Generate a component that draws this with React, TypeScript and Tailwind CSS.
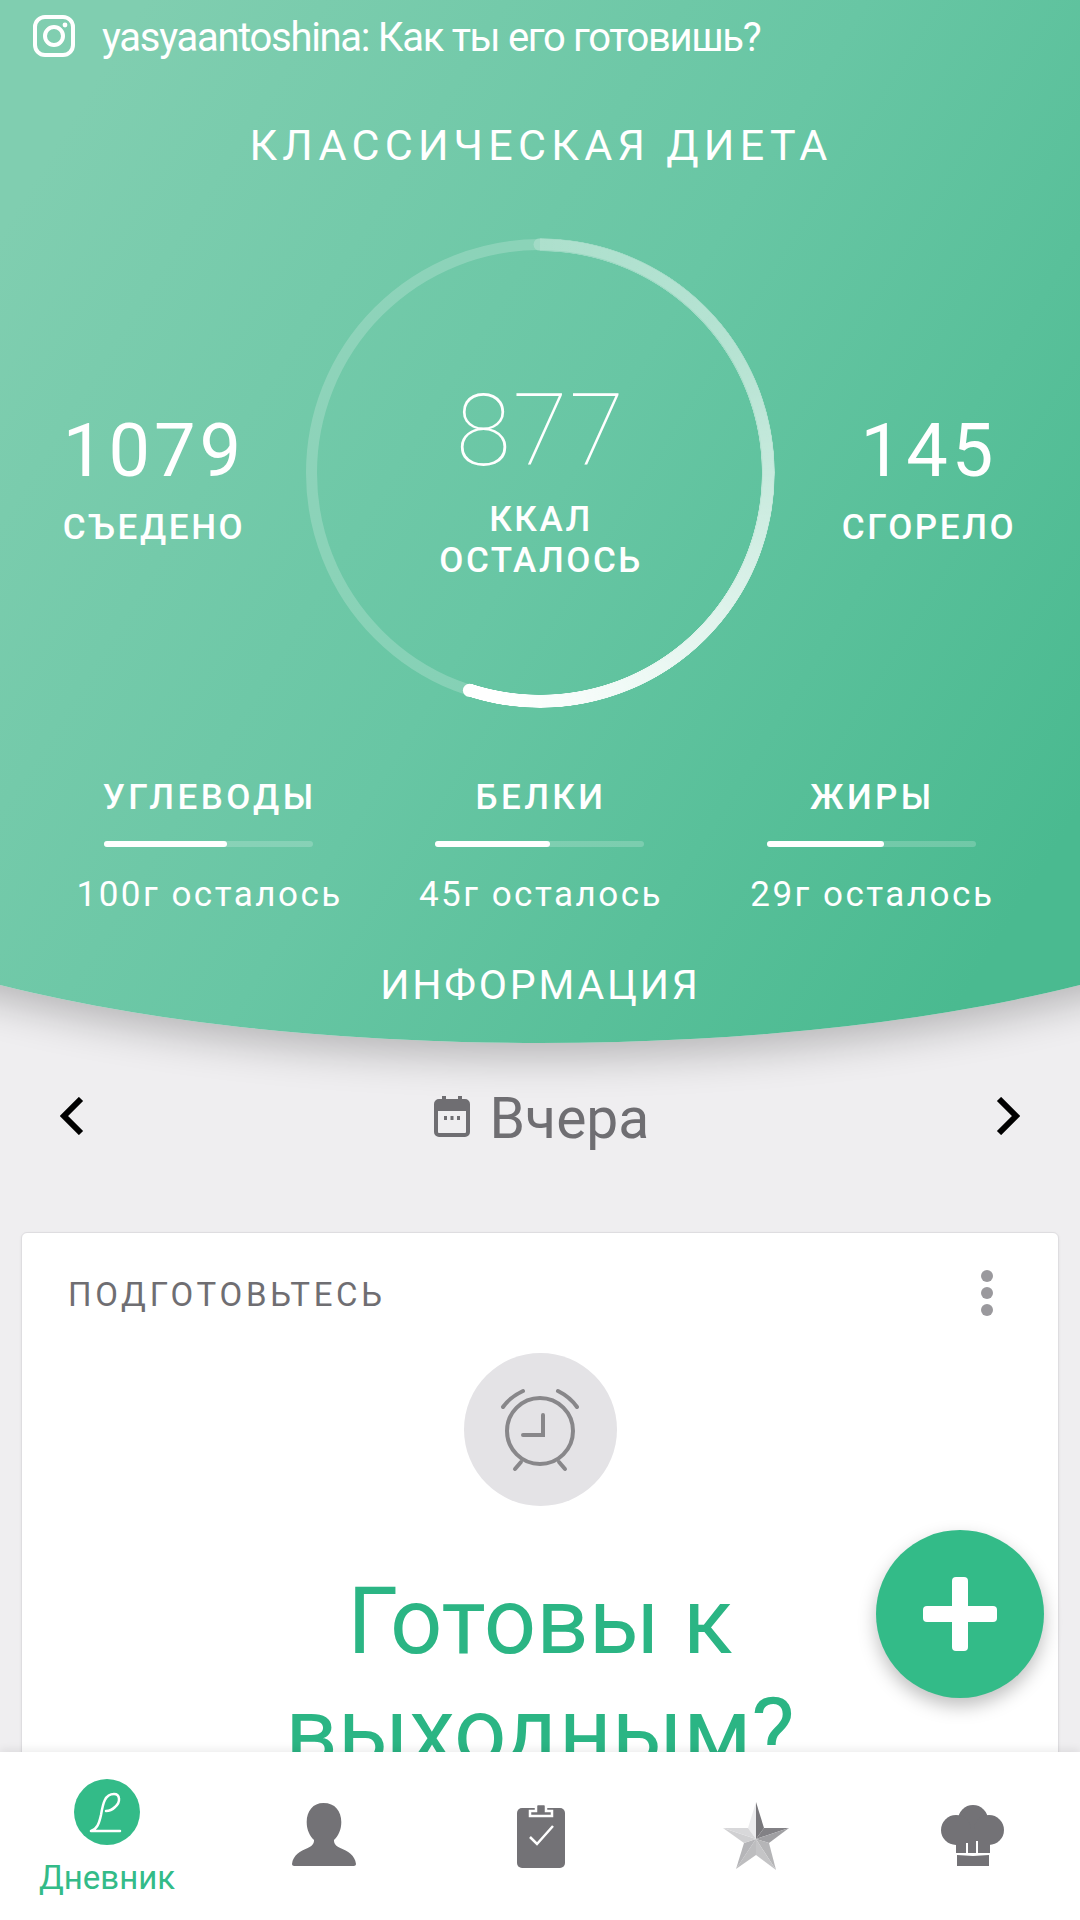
function Ring() {
  const a = ((198 - 90) * Math.PI) / 180;
  const ex = 235 + 228.5 * Math.cos(a);
  const ey = 235 + 228.5 * Math.sin(a);
  return (
    <>
      <svg width="470" height="470" viewBox="0 0 470 470" className="absolute inset-0">
        <circle cx="235" cy="235" r="228.5" fill="none" stroke="#ffffff" strokeOpacity="0.2" strokeWidth="11" />
        <path d="M235 0a6.5 6.5 0 0 0 0 13z" fill="#ffffff" fillOpacity="0.2" />
        <circle cx={ex} cy={ey} r="6.5" fill="#ffffff" />
      </svg>
      <div className="absolute inset-0 rounded-full bg-[conic-gradient(rgba(255,255,255,0.3)_0deg,rgba(255,255,255,0.42)_60deg,rgba(255,255,255,0.62)_100deg,rgba(255,255,255,0.86)_150deg,#fff_190deg,#fff_198deg,transparent_198deg)] [mask:radial-gradient(closest-side,transparent_221.5px,#000_222px,#000_234.5px,transparent_235px)]" />
    </>
  );
}

function Stat({ value, label }: { value: string; label: string }) {
  return (
    <div className="flex w-[306px] flex-col items-center pt-[177px] pl-[3px]">
      <div className="text-[74px] leading-[72px] tracking-[4px]">{value}</div>
      <div className="mt-[21px] text-[35px] leading-[40px] font-medium tracking-[2.6px]">{label}</div>
    </div>
  );
}

function Macro({ name, left, fill }: { name: string; left: string; fill: string }) {
  return (
    <div className="flex flex-col items-center">
      <div className="mt-[1px] pl-[2px] text-[35px] leading-[40px] font-medium tracking-[3.4px]">{name}</div>
      <div className="mt-[23px] h-[6px] w-[209px] rounded-full bg-white/20">
        <div className={`h-full rounded-full bg-white ${fill}`} />
      </div>
      <div className="mt-[28px] pl-[2px] text-[35px] leading-[40px] tracking-[2.5px] whitespace-nowrap">{left}</div>
    </div>
  );
}

function Header() {
  return (
    <header className="relative z-10 -mx-[260px] h-[1043px] w-[1600px] rounded-b-[50%_221px] bg-[linear-gradient(122deg,#80ceb0_18%,#68c6a4_50%,#4aba90_82%)] px-[260px] text-white shadow-[0_14px_40px_rgba(0,0,0,0.24)]">
      <div className="flex h-[57px] items-center pt-[15px] pl-[33px]">
        <svg width="42" height="42" viewBox="0 0 42 42" fill="none" stroke="#fff" strokeWidth="4">
          <rect x="2" y="2" width="38" height="38" rx="10" />
          <circle cx="21" cy="21" r="9" />
          <circle cx="32" cy="10" r="2.4" fill="#fff" stroke="none" />
        </svg>
        <span className="mt-[3px] ml-[27px] text-[40px] leading-[42px] tracking-[-1.3px] whitespace-nowrap">yasyaantoshina: Как ты его готовишь?</span>
      </div>
      <h1 className="mt-[64px] pl-[2px] text-center text-[43px] leading-[48px] tracking-[5.3px]">КЛАССИЧЕСКАЯ ДИЕТА</h1>
      <div className="mt-[69px] flex h-[470px] justify-between">
        <Stat value="1079" label="СЪЕДЕНО" />
        <div className="relative h-[470px] w-[470px] shrink-0">
          <Ring />
          <div className="flex flex-col items-center pt-[143px] pl-[2px]">
            <div className="text-[100px] leading-[100px] font-thin tracking-[2px]">877</div>
            <div className="mt-[18px] text-center text-[35px] leading-[41px] font-medium tracking-[2.5px]">
              ККАЛ
              <br />
              ОСТАЛОСЬ
            </div>
          </div>
        </div>
        <Stat value="145" label="СГОРЕЛО" />
      </div>
      <div className="mt-[69px] grid grid-cols-3 px-[43px]">
        <Macro name="УГЛЕВОДЫ" left="100г осталось" fill="w-[59%]" />
        <Macro name="БЕЛКИ" left="45г осталось" fill="w-[55%]" />
        <Macro name="ЖИРЫ" left="29г осталось" fill="w-[56%]" />
      </div>
      <div className="mt-[46px] pl-[1px] text-center text-[41px] leading-[48px] tracking-[2.8px]">ИНФОРМАЦИЯ</div>
    </header>
  );
}

function DateRow() {
  return (
    <div className="mt-[33px] flex h-[80px] items-center justify-between px-[60px]">
      <svg width="24" height="38" viewBox="0 0 24 38" fill="none" stroke="#000" strokeWidth="6">
        <path d="M21 2 4 19l17 17" />
      </svg>
      <div className="flex items-center pl-[3px] text-[#6f6e72]">
        <svg width="36" height="41" viewBox="0 0 36 41" fill="none">
          <rect x="2" y="5" width="32" height="34" rx="3" stroke="#6f6e72" strokeWidth="4" />
          <path d="M2 8a3 3 0 0 1 3-3h26a3 3 0 0 1 3 3v7H2z" fill="#6f6e72" />
          <path d="M8 0h4v6H8zM24 0h4v6h-4z" fill="#6f6e72" />
          <path d="M10 20h3v4h-3zM16.5 20h3v4h-3zM23 20h3v4h-3z" fill="#6f6e72" />
        </svg>
        <span className="mt-[6px] ml-[20px] text-[57px] leading-[64px]">Вчера</span>
      </div>
      <svg width="24" height="38" viewBox="0 0 24 38" fill="none" stroke="#000" strokeWidth="6">
        <path d="M3 2l17 17L3 36" />
      </svg>
    </div>
  );
}

function AlarmIcon() {
  return (
    <svg width="90" height="90" viewBox="0 0 90 90" fill="none" stroke="#88878a" strokeWidth="4" strokeLinecap="round">
      <circle cx="45" cy="46" r="33" />
      <path d="M48 30v20H28" />
      <path d="M8 22Q15 12 28 6M82 22Q75 12 63 6" />
      <path d="M20 84l6-7M70 84l-6-7" />
    </svg>
  );
}

function Card() {
  return (
    <section className="mx-[21px] mt-[76px] h-[900px] rounded-[6px] border border-[#dedde0] bg-white pt-[40px] shadow-[0_1px_3px_rgba(0,0,0,0.06)]">
      <div className="flex h-[40px] items-center justify-between pr-[65px] pl-[46px]">
        <span className="mt-[3px] text-[33px] leading-[40px] tracking-[3.7px] text-[#6f6e72]">ПОДГОТОВЬТЕСЬ</span>
        <div className="flex flex-col gap-[5px]">
          <div className="h-[12px] w-[12px] rounded-full bg-[#9a999d]" />
          <div className="h-[12px] w-[12px] rounded-full bg-[#9a999d]" />
          <div className="h-[12px] w-[12px] rounded-full bg-[#9a999d]" />
        </div>
      </div>
      <div className="mx-auto mt-[40px] flex h-[153px] w-[153px] items-center justify-center rounded-full bg-[#e4e3e6]">
        <AlarmIcon />
      </div>
      <h2 className="mt-[61px] px-[150px] text-center text-[92px] leading-[110px] text-[#2bb584]">Готовы к выходным?</h2>
    </section>
  );
}

function Fab() {
  return (
    <button className="absolute top-[1530px] left-[876px] z-20 flex h-[168px] w-[168px] items-center justify-center rounded-full bg-[#33bb88] shadow-[0_8px_18px_rgba(0,0,0,0.25)]">
      <svg width="74" height="74" viewBox="0 0 74 74" fill="#fff">
        <rect x="29" y="0" width="16" height="74" rx="4" />
        <rect x="0" y="29" width="74" height="16" rx="4" />
      </svg>
    </button>
  );
}

function BottomNav() {
  const dark = "#737276";
  return (
    <nav className="absolute right-0 bottom-0 left-0 z-30 grid h-[168px] grid-cols-5 bg-white shadow-[0_-3px_8px_rgba(0,0,0,0.07)]">
      <div className="flex flex-col items-center pt-[27px] pr-[2px]">
        <svg width="66" height="66" viewBox="0 0 66 66" fill="none">
          <circle cx="33" cy="33" r="33" fill="#33bb88" />
          <path d="M17 52C23 50 25 45 27 36 29 24 31 15 40 15 46 15 47 23 41 28 38 31 35 32 32 32M17 52H46" stroke="#fff" strokeWidth="2.5" strokeLinecap="round" />
        </svg>
        <span className="mt-[13px] text-[33px] leading-[40px] text-[#33bb88]">Дневник</span>
      </div>
      <div className="flex justify-center pt-[51px]">
        <svg width="64" height="63" viewBox="0 0 61 63" preserveAspectRatio="none" fill={dark}>
          <path d="M30 0C20 0 14 8 14 19c0 8 3 14 7 18 0 4-2 6-6 8C8 48 1 52 0 61c0 1 1 2 2 2h57c1 0 2-1 2-2-1-9-8-13-15-16-4-2-6-4-6-8 4-4 7-10 7-18C47 8 41 0 30 0z" />
        </svg>
      </div>
      <div className="flex justify-center pt-[51px] pl-[2px]">
        <svg width="48" height="65" viewBox="0 0 48 65" fill="none">
          <rect x="0" y="5" width="48" height="60" rx="5" fill={dark} />
          <path d="M13 13V8h6V3a2 2 0 0 1 2-2h6a2 2 0 0 1 2 2v5h6v5z" fill={dark} stroke="#fff" strokeWidth="2.5" />
          <path d="M13 34l7 7 16-18" stroke="#fff" strokeWidth="2.5" />
        </svg>
      </div>
      <div className="flex justify-center pt-[50px]">
        <svg width="66" height="68" viewBox="0 0 66 68">
          <polygon points="33,0 25,26 33,37" fill="#ececee" />
          <polygon points="33,0 41,26 33,37" fill="#78777b" />
          <polygon points="41,26 66,26 33,37" fill="#828185" />
          <polygon points="66,26 46,41 33,37" fill="#a0a0a3" />
          <polygon points="46,41 53,68 33,37" fill="#b5b5b7" />
          <polygon points="53,68 33,53 33,37" fill="#c4c4c6" />
          <polygon points="33,53 13,67 33,37" fill="#bdbdbf" />
          <polygon points="13,67 21,41 33,37" fill="#b5b5b8" />
          <polygon points="21,41 0,26 33,37" fill="#d0d0d2" />
          <polygon points="0,26 25,26 33,37" fill="#d8d8da" />
        </svg>
      </div>
      <div className="flex justify-center pt-[53px]">
        <svg width="63" height="61" viewBox="0 0 63 61" fill={dark}>
          <circle cx="32" cy="15" r="15" />
          <circle cx="15" cy="25" r="15" />
          <circle cx="48" cy="25" r="15" />
          <rect x="15" y="25" width="34" height="23" />
          <path d="M16 50l16 1 16-1v11H16z" />
          <path d="M26 38v10M36 36v12" stroke="#fff" strokeWidth="2" />
        </svg>
      </div>
    </nav>
  );
}

export default function App() {
  return (
    <div className="relative h-[1920px] w-[1080px] overflow-hidden bg-[#efeef0] font-['Roboto',sans-serif]">
      <Header />
      <DateRow />
      <Card />
      <Fab />
      <BottomNav />
    </div>
  );
}
